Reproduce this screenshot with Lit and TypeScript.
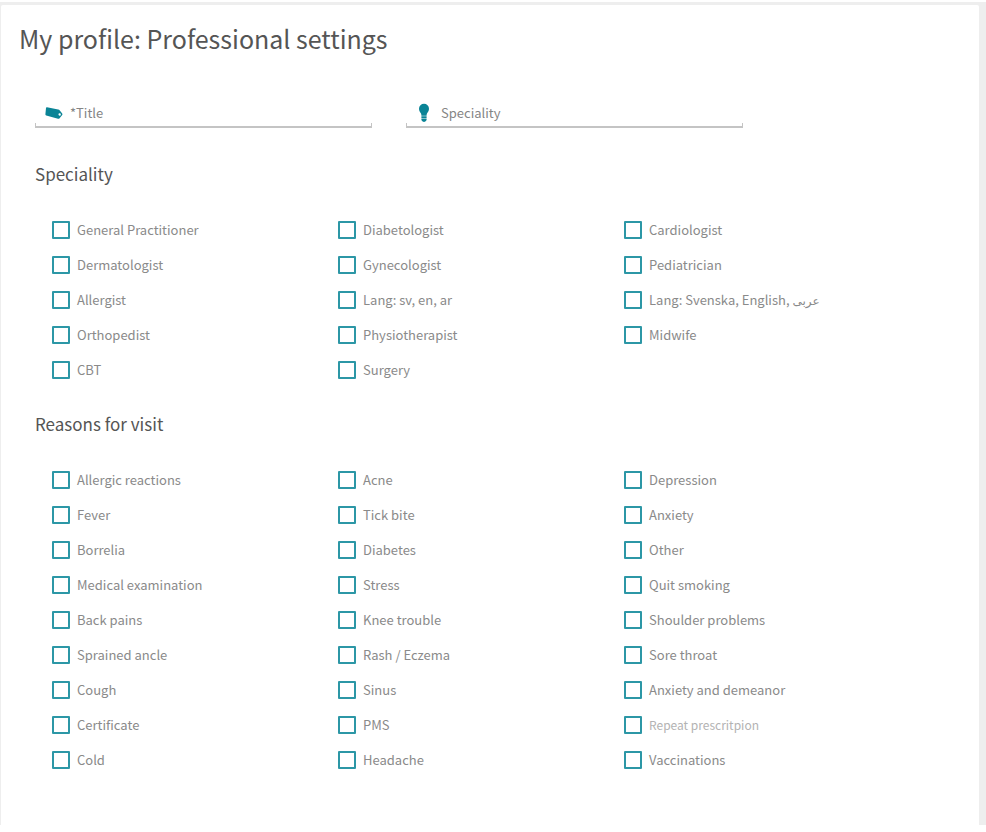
import { LitElement, html, css, svg } from "lit";
import { customElement, property } from "lit/decorators.js";

interface Option {
  label: string;
  native?: string;
  muted?: boolean;
}

const toOptions = (labels: string[]): Option[] => labels.map((label) => ({ label }));

const SPECIALITIES: Option[] = [
  ...toOptions([
    "General Practitioner", "Diabetologist", "Cardiologist",
    "Dermatologist", "Gynecologist", "Pediatrician",
    "Allergist", "Lang: sv, en, ar",
  ]),
  { label: "Lang: Svenska, English,", native: "عربى" },
  ...toOptions(["Orthopedist", "Physiotherapist", "Midwife", "CBT", "Surgery"]),
];

const REASONS: Option[] = [
  ...toOptions([
    "Allergic reactions", "Acne", "Depression",
    "Fever", "Tick bite", "Anxiety",
    "Borrelia", "Diabetes", "Other",
    "Medical examination", "Stress", "Quit smoking",
    "Back pains", "Knee trouble", "Shoulder problems",
    "Sprained ancle", "Rash / Eczema", "Sore throat",
    "Cough", "Sinus", "Anxiety and demeanor",
    "Certificate", "PMS",
  ]),
  { label: "Repeat prescritpion", muted: true },
  ...toOptions(["Cold", "Headache", "Vaccinations"]),
];

const tagIcon = svg`<path fill-rule="evenodd" d="M2 4.200 13.200 6.600Q14.200 6.800 14.800 7.600L17.200 10.600Q17.700 11.300 17.200 12L14.600 15.200Q14 15.900 13 15.700L1.200 12.500Q.3 12.200 .4 11.300L1 5Q1.100 4.100 2 4.200ZM14.600 10.300a1.200 1.200 0 1 0 .1 2.400a1.200 1.200 0 0 0-.1-2.400Z"/>`;
const bulbIcon = svg`<path d="M8 .8a5 5 0 0 1 5 5c0 2.200-1.200 3.400-2 4.800-.4.700-.3 1.500-.4 2.200H5.400c-.1-.7 0-1.500-.4-2.200C4.200 9.200 3 8 3 5.800a5 5 0 0 1 5-5Z"/><path d="M5.400 13.300h5.200v1.600H5.400zM5.400 15.400h5.200v1.400q-.2 1.300-1.300 1.800L8 19.100l-1.300-.5q-1.100-.5-1.300-1.800z"/>`;

@customElement("option-group")
export class OptionGroup extends LitElement {
  @property() heading = "";
  @property({ attribute: false }) options: Option[] = [];

  static styles = css`
    :host { display: block; }
    fieldset { border: 0; margin: 0; padding: 0; min-width: 0; }
    legend {
      padding: 0;
      margin-bottom: 26px;
      font-size: 17px;
      line-height: 24px;
      color: #555;
    }
    .options {
      display: grid;
      grid-template-columns: repeat(3, 1fr);
      grid-auto-rows: 35px;
      padding: 0 35px 0 17px;
    }
    label {
      display: flex;
      align-items: center;
      gap: 7px;
      font-size: 13px;
      line-height: 20px;
      color: #8a8a8a;
    }
    input {
      appearance: none;
      box-sizing: border-box;
      flex: none;
      width: 18px;
      height: 18px;
      margin: 0;
      border: 2px solid #2c97a6;
      border-radius: 1px;
      background: #fff;
    }
    input:checked { background: #2c97a6; }
    .muted { color: #b3b3b3; font-size: 12px; }
    .native { font-family: "DejaVu Sans", sans-serif; font-size: 12px; line-height: 1; }
  `;

  render() {
    return html`
      <fieldset>
        <legend>${this.heading}</legend>
        <div class="options">
          ${this.options.map((o) => html`
            <label>
              <input type="checkbox" />
              <span class=${o.muted ? "muted" : "text"}>${o.label}${o.native
                ? html` <span class="native" lang="ar">${o.native}</span>`
                : ""}</span>
            </label>`)}
        </div>
      </fieldset>`;
  }
}

@customElement("app-root")
export class AppRoot extends LitElement {
  static styles = css`
    :host {
      display: block;
      padding-top: 2px;
      font-family: "Noto Sans CJK SC", "Open Sans", sans-serif;
    }
    .frame {
      background: #eee;
      padding: 3px 7px 0 1px;
    }
    main {
      background: #fff;
      border-radius: 2px 2px 0 0;
      padding: 13px 18px 48px;
    }
    h1 {
      margin: 0 0 41px;
      font-size: 25px;
      font-weight: 400;
      line-height: 40px;
      color: #555;
    }
    form {
      display: flex;
      flex-direction: column;
      padding: 0 16px;
    }
    .fields {
      display: grid;
      grid-template-columns: repeat(2, minmax(0, 337px));
      gap: 34px;
      margin-bottom: 34px;
    }
    .field {
      display: flex;
      align-items: center;
      gap: 7px;
      height: 27px;
      padding: 0 0 2px 10px;
      background:
        linear-gradient(#c4c4c4, #c4c4c4) left bottom / 100% 2px no-repeat,
        linear-gradient(#c4c4c4, #c4c4c4) left bottom / 1px 5px no-repeat,
        linear-gradient(#c4c4c4, #c4c4c4) right bottom / 1px 5px no-repeat;
    }
    svg { flex: none; width: 18px; height: 20px; fill: #0a8496; }
    input {
      flex: 1;
      min-width: 0;
      border: 0;
      padding: 0;
      outline: 0;
      background: none;
      font: inherit;
      font-size: 13px;
      line-height: 20px;
      color: #555;
    }
    input::placeholder { color: #858585; opacity: 1; }
    .groups { display: grid; gap: 25px; }
  `;

  render() {
    return html`
      <div class="frame">
        <main>
          <h1>My profile: Professional settings</h1>
          <form>
            <div class="fields">
              <label class="field">
                <svg viewBox="0 0 18 20" aria-hidden="true">${tagIcon}</svg>
                <input type="text" placeholder="*Title" aria-label="Title" required />
              </label>
              <label class="field">
                <svg viewBox="0 0 18 20" aria-hidden="true">${bulbIcon}</svg>
                <input type="text" placeholder="Speciality" aria-label="Speciality" />
              </label>
            </div>
            <div class="groups">
              <option-group heading="Speciality" .options=${SPECIALITIES}></option-group>
              <option-group heading="Reasons for visit" .options=${REASONS}></option-group>
            </div>
          </form>
        </main>
      </div>`;
  }
}
